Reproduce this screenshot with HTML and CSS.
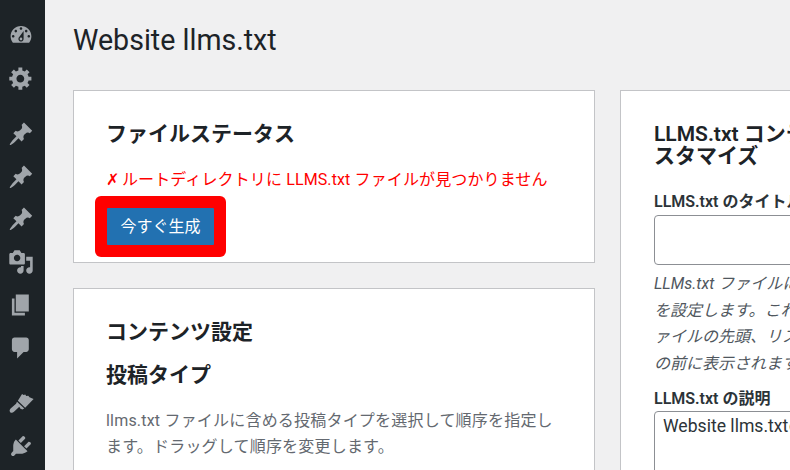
FILE: index.html
```html
<!DOCTYPE html>
<html lang="ja">
<head>
    <meta charset="UTF-8">
    <title>Website llms.txt</title>
    <link rel="stylesheet" href="styles.css">
</head>
<body>
    <div class="admin">
        <nav class="sidebar">
            <a class="menu-item"><svg viewBox="0 0 20 20"><path d="M3.76 16h12.48c1.1-1.37 1.76-3.11 1.76-5 0-4.42-3.58-8-8-8s-8 3.58-8 8c0 1.89.66 3.63 1.76 5zM10 4c.55 0 1 .45 1 1s-.45 1-1 1-1-.45-1-1 .45-1 1-1zM6 6c.55 0 1 .45 1 1s-.45 1-1 1-1-.45-1-1 .45-1 1-1zm8 0c.55 0 1 .45 1 1s-.45 1-1 1-1-.45-1-1 .45-1 1-1zm-5.37 5.55L12 7v6c0 1.1-.9 2-2 2s-2-.9-2-2c0-.57.24-1.08.63-1.45zM4 10c.55 0 1 .45 1 1s-.45 1-1 1-1-.45-1-1 .45-1 1-1zm12 0c.55 0 1 .45 1 1s-.45 1-1 1-1-.45-1-1 .45-1 1-1zm-5 3c0-.55-.45-1-1-1s-1 .45-1 1 .45 1 1 1 1-.45 1-1z"/></svg></a>
            <a class="menu-item"><svg viewBox="0 0 20 20"><path d="M18 12h-2.18c-.17.7-.44 1.35-.81 1.93l1.54 1.54-2.1 2.1-1.54-1.54c-.58.36-1.23.63-1.91.79V19H8v-2.18c-.68-.16-1.33-.43-1.91-.79l-1.54 1.54-2.12-2.12 1.54-1.54c-.36-.58-.63-1.23-.79-1.91H1V9.03h2.17c.16-.7.44-1.35.8-1.94L2.43 5.55l2.1-2.1 1.54 1.54c.58-.37 1.24-.64 1.93-.81V2h3v2.18c.68.16 1.33.43 1.91.79l1.54-1.54 2.12 2.12-1.54 1.54c.36.59.64 1.24.8 1.94H18V12zm-8.5 1.5c1.66 0 3-1.34 3-3s-1.34-3-3-3-3 1.34-3 3 1.34 3 3 3z"/></svg></a>
            <a class="menu-item menu-gap"><svg viewBox="0 0 20 20"><path d="M10.44 3.02l1.82-1.82 6.36 6.35-1.83 1.82c-1.05-.68-2.48-.57-3.41.36l-.75.75c-.92.93-1.04 2.35-.35 3.41l-1.83 1.82-2.41-2.41-2.8 2.79c-.42.42-3.38 2.71-3.8 2.29s1.86-3.39 2.28-3.81l2.79-2.79L4.1 9.36l1.83-1.82c1.05.69 2.48.57 3.41-.36l.75-.75c.93-.92 1.04-2.35.35-3.41z"/></svg></a>
            <a class="menu-item"><svg viewBox="0 0 20 20"><path d="M10.44 3.02l1.82-1.82 6.36 6.35-1.83 1.82c-1.05-.68-2.48-.57-3.41.36l-.75.75c-.92.93-1.04 2.35-.35 3.41l-1.83 1.82-2.41-2.41-2.8 2.79c-.42.42-3.38 2.71-3.8 2.29s1.86-3.39 2.28-3.81l2.79-2.79L4.1 9.36l1.83-1.82c1.05.69 2.48.57 3.41-.36l.75-.75c.93-.92 1.04-2.35.35-3.41z"/></svg></a>
            <a class="menu-item"><svg viewBox="0 0 20 20"><path d="M10.44 3.02l1.82-1.82 6.36 6.35-1.83 1.82c-1.05-.68-2.48-.57-3.41.36l-.75.75c-.92.93-1.04 2.35-.35 3.41l-1.83 1.82-2.41-2.41-2.8 2.79c-.42.42-3.38 2.71-3.8 2.29s1.86-3.39 2.28-3.81l2.79-2.79L4.1 9.36l1.83-1.82c1.05.69 2.48.57 3.41-.36l.75-.75c.93-.92 1.04-2.35.35-3.41z"/></svg></a>
            <a class="menu-item"><svg viewBox="0 0 20 20"><path d="M13 11V4c0-.55-.45-1-1-1h-1.67L9 1H5L3.67 3H2c-.55 0-1 .45-1 1v7c0 .55.45 1 1 1h10c.55 0 1-.45 1-1zM7 4.5c1.38 0 2.5 1.12 2.5 2.5S8.38 9.5 7 9.5 4.5 8.38 4.5 7 5.62 4.5 7 4.5zM14 6h5v10.5c0 1.38-1.12 2.5-2.5 2.5S14 17.88 14 16.5s1.12-2.5 2.5-2.5c.17 0 .34.02.5.05V9h-3V6zm-4 8.05V13h2v3.5c0 1.38-1.12 2.5-2.5 2.5S7 17.88 7 16.5 8.12 14 9.5 14c.17 0 .34.02.5.05z"/></svg></a>
            <a class="menu-item"><svg viewBox="0 0 20 20"><path d="M6 15V2h10v13H6zm-1 1h8v2H3V5h2v11z"/></svg></a>
            <a class="menu-item"><svg viewBox="0 0 20 20"><path d="M5 2h9c1.1 0 2 .9 2 2v7c0 1.1-.9 2-2 2h-2l-5 5v-5H5c-1.1 0-2-.9-2-2V4c0-1.1.9-2 2-2z"/></svg></a>
            <a class="menu-item menu-gap"><svg viewBox="0 0 20 20"><path d="M10.8 3.1L12 3.9 13.3 3.500 14 4.600 15.600 4.400 16.500 5.600 19.700 6.900 13.200 13.600 7.600 8.300zM6.900 9L12.500 14.300 11 15 9.400 14.200 8.700 12.800 4.600 16.800C3.600 17.700 2.400 17.800 1.700 17.100 1 16.400 1.100 15.200 2 14.300L6.200 10.500z"/></svg></a>
            <a class="menu-item"><svg viewBox="0 0 20 20"><path d="M13.11 4.36L9.87 7.6 8 5.73l3.24-3.24c.35-.34 1.05-.2 1.56.32.52.51.66 1.21.31 1.55zm-8 1.77l.91-1.12 9.01 9.01-1.19.84c-.71.71-2.63 1.16-3.82 1.16H6.14L4.9 17.26c-.59.59-1.54.59-2.12 0-.59-.58-.59-1.53 0-2.12l1.24-1.24v-3.88c0-1.13.4-3.05 1.09-3.89zm7.26 3.97l3.24-3.24c.34-.35 1.04-.21 1.55.31.52.51.66 1.21.31 1.55l-3.24 3.25z"/></svg></a>
        </nav>

        <main class="content">
            <h1 class="page-title">Website llms.txt</h1>

            <div class="columns">
                <div class="column">
                    <section class="card card-status">
                        <h2 class="card-title">ファイルステータス</h2>
                        <p class="status-error"><span class="cross">✗</span>ルートディレクトリに LLMS.txt ファイルが見つかりません</p>
                        <div class="highlight">
                            <button class="generate-button">今すぐ生成</button>
                        </div>
                    </section>

                    <section class="card">
                        <h2 class="card-title card-title-section">コンテンツ設定</h2>
                        <h3 class="card-subtitle">投稿タイプ</h3>
                        <p class="card-text">llms.txt ファイルに含める投稿タイプを選択して順序を指定します。ドラッグして順序を変更します。</p>
                    </section>
                </div>

                <div class="column">
                    <section class="card card-custom">
                        <h2 class="card-title card-title-tight">LLMS.txt コンテンツのカスタマイズ</h2>
                        <label class="field-label">LLMS.txt のタイトル</label>
                        <input class="field-input" type="text">
                        <p class="field-help">LLMs.txt ファイルに使うタイトルを設定します。これは LLMS.txt ファイルの先頭、リストセクションの前に表示されます。</p>
                        <label class="field-label">LLMS.txt の説明</label>
                        <textarea class="field-textarea">Website llms.txtの説明</textarea>
                    </section>
                </div>
            </div>
        </main>
    </div>
</body>
</html>
```

FILE: styles.css
```css
* {
    margin: 0;
    padding: 0;
    box-sizing: border-box;
}

html,
body {
    height: 100%;
    overflow: hidden;
}

body {
    font-family: Roboto, "Noto Sans CJK JP", sans-serif;
    font-size: 16px;
    color: #1d2327;
    background-color: #f0f0f1;
}

.admin {
    display: flex;
    height: 470px;
    overflow: hidden;
}

/* Admin menu, collapsed */
.sidebar {
    flex: 0 0 45px;
    padding: 14px 0 0 8px;
    background-color: #1d2327;
    display: flex;
    flex-direction: column;
}

.menu-item {
    display: flex;
    align-items: center;
    height: 42.75px;
    flex-shrink: 0;
}

.menu-gap {
    margin-top: 13px;
}

.menu-item svg {
    width: 26px;
    height: 26px;
    fill: #a0a5aa;
}

.content {
    flex: 1;
    min-width: 0;
    padding: 21px 0 0 28px;
}

.page-title {
    font-size: 28.6px;
    font-weight: 400;
    line-height: 38px;
    margin-bottom: 31px;
}

.columns {
    display: grid;
    grid-template-columns: 522px 316px;
    gap: 25px;
    align-items: start;
}

.card {
    background-color: #fff;
    border: 1px solid #c3c4c7;
    padding: 32px;
    margin-bottom: 25px;
}

.card-status {
    padding-bottom: 5px;
}

.card-custom {
    padding-left: 33px;
}

.card-title {
    font-size: 21px;
    font-weight: 600;
    line-height: 22px;
    margin-bottom: 23px;
}

.card-title-section {
    margin-bottom: 19px;
}

.card-title-tight {
    margin-bottom: 25px;
}

.status-error {
    color: #f00;
    line-height: 24px;
    letter-spacing: 0.12px;
    margin-bottom: 4px;
}

.cross {
    display: inline-block;
    width: 16px;
    font-family: "DejaVu Sans", sans-serif;
}

/* Red marker drawn round the button */
.highlight {
    display: inline-block;
    padding: 12px;
    margin-left: -11px;
    background-color: #f00;
    border-radius: 6px;
    vertical-align: top;
}

.generate-button {
    display: block;
    width: 107px;
    height: 37px;
    padding-bottom: 3px;
    background-color: #2271b1;
    color: #fff;
    border: none;
    border-radius: 1px;
    font-family: inherit;
    font-size: 16px;
}

.card-subtitle {
    font-size: 21px;
    font-weight: 600;
    line-height: 27px;
    margin-bottom: 19px;
}

.card-text {
    color: #646970;
    line-height: 26px;
    letter-spacing: 0.2px;
}

.field-label {
    display: block;
    font-size: 16px;
    font-weight: 600;
    line-height: 20px;
    color: #2c3338;
}

.field-input {
    display: block;
    width: 100%;
    height: 50px;
    margin-top: 3px;
    border: 1px solid #8c8f94;
    border-radius: 4px;
    background-color: #fff;
}

.field-help {
    margin: 6px 0 12px;
    font-size: 16px;
    font-style: italic;
    line-height: 26.5px;
    color: #50575e;
}

.field-textarea {
    display: block;
    width: 100%;
    height: 120px;
    margin-top: 2px;
    padding: 1px 8px;
    border: 1px solid #8c8f94;
    border-radius: 4px;
    font-family: inherit;
    font-size: 17.6px;
    line-height: 26px;
    color: #2c3338;
    resize: none;
}
```
